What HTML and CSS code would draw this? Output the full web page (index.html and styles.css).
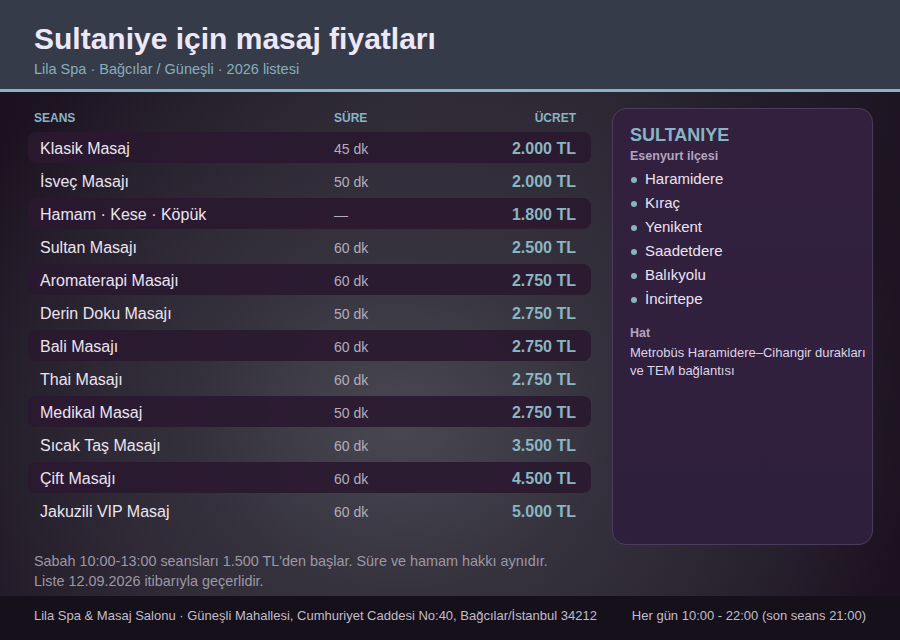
FILE: index.html
```html
<!DOCTYPE html>
<html lang="tr">
<head>
<meta charset="utf-8">
<title>Sultaniye için masaj fiyatları</title>
<link rel="stylesheet" href="styles.css">
</head>
<body>
<div class="page">
  <header class="top">
    <h1 class="title">Sultaniye için masaj fiyatları</h1>
    <div class="subtitle">Lila Spa · Bağcılar / Güneşli · 2026 listesi</div>
  </header>
  <main class="main">
    <div class="content">
      <section class="table">
        <div class="thead">
          <span>SEANS</span><span>SÜRE</span><span class="r">ÜCRET</span>
        </div>
        <div class="rows">
          <div class="row alt"><span class="name">Klasik Masaj</span><span class="dur">45 dk</span><span class="price">2.000 TL</span></div>
          <div class="row"><span class="name">İsveç Masajı</span><span class="dur">50 dk</span><span class="price">2.000 TL</span></div>
          <div class="row alt"><span class="name">Hamam · Kese · Köpük</span><span class="dur">—</span><span class="price">1.800 TL</span></div>
          <div class="row"><span class="name">Sultan Masajı</span><span class="dur">60 dk</span><span class="price">2.500 TL</span></div>
          <div class="row alt"><span class="name">Aromaterapi Masajı</span><span class="dur">60 dk</span><span class="price">2.750 TL</span></div>
          <div class="row"><span class="name">Derin Doku Masajı</span><span class="dur">50 dk</span><span class="price">2.750 TL</span></div>
          <div class="row alt"><span class="name">Bali Masajı</span><span class="dur">60 dk</span><span class="price">2.750 TL</span></div>
          <div class="row"><span class="name">Thai Masajı</span><span class="dur">60 dk</span><span class="price">2.750 TL</span></div>
          <div class="row alt"><span class="name">Medikal Masaj</span><span class="dur">50 dk</span><span class="price">2.750 TL</span></div>
          <div class="row"><span class="name">Sıcak Taş Masajı</span><span class="dur">60 dk</span><span class="price">3.500 TL</span></div>
          <div class="row alt"><span class="name">Çift Masajı</span><span class="dur">60 dk</span><span class="price">4.500 TL</span></div>
          <div class="row"><span class="name">Jakuzili VIP Masaj</span><span class="dur">60 dk</span><span class="price">5.000 TL</span></div>
        </div>
      </section>
      <aside class="side">
        <div class="side-title">SULTANIYE</div>
        <div class="side-label">Esenyurt ilçesi</div>
        <ul class="places">
          <li>Haramidere</li>
          <li>Kıraç</li>
          <li>Yenikent</li>
          <li>Saadetdere</li>
          <li>Balıkyolu</li>
          <li>İncirtepe</li>
        </ul>
        <div class="side-label hat">Hat</div>
        <p class="side-text">Metrobüs Haramidere–Cihangir durakları ve TEM bağlantısı</p>
      </aside>
    </div>
    <div class="notes">
      <p>Sabah 10:00-13:00 seansları 1.500 TL'den başlar. Süre ve hamam hakkı aynıdır.</p>
      <p>Liste 12.09.2026 itibarıyla geçerlidir.</p>
    </div>
  </main>
  <footer class="foot">
    <span>Lila Spa &amp; Masaj Salonu · Güneşli Mahallesi, Cumhuriyet Caddesi No:40, Bağcılar/İstanbul 34212</span>
    <span>Her gün 10:00 - 22:00 (son seans 21:00)</span>
  </footer>
</div>
</body>
</html>
```
FILE: styles.css
```css
* { box-sizing: border-box; }
html, body { margin: 0; padding: 0; }
body {
  font-family: "Liberation Sans", Arial, sans-serif;
  background: #1b1120;
  color: #ece4f0;
}
.page {
  width: 900px;
  height: 640px;
  display: flex;
  flex-direction: column;
  overflow: hidden;
}
.top {
  height: 92px;
  flex-shrink: 0;
  background: #363b4a;
  border-bottom: 3px solid #86b4c6;
  padding: 21px 34px 0;
}
.title {
  margin: 0;
  font-size: 30px;
  line-height: 36px;
  font-weight: 700;
  color: #eee8f6;
}
.subtitle {
  margin-top: 3px;
  font-size: 14.5px;
  line-height: 18px;
  color: #86afbb;
}
.main {
  flex: 1;
  min-height: 0;
  padding: 16px 27px 0 28px;
  background:
    radial-gradient(ellipse 520px 430px at 400px 330px, rgba(74,74,84,0.95) 0%, rgba(58,56,66,0.7) 40%, rgba(28,18,32,0) 100%),
    linear-gradient(100deg, #1b1120 0%, #2a2532 40%, #2a2431 60%, #1b1120 100%);
}
.content {
  display: grid;
  grid-template-columns: 563px 261px;
  column-gap: 21px;
  align-items: start;
}
.thead {
  display: grid;
  grid-template-columns: 300px 1fr auto;
  padding: 0 15px 0 6px;
  height: 20px;
  line-height: 20px;
  font-size: 12px;
  font-weight: 700;
  color: #8ab4c2;
}
.r { text-align: right; }
.rows {
  margin-top: 4px;
  display: flex;
  flex-direction: column;
  gap: 2px;
}
.row {
  display: grid;
  grid-template-columns: 294px 1fr auto;
  align-items: center;
  height: 31px;
  padding: 3px 15px 0 12px;
  border-radius: 8px;
}
.row.alt { background: rgba(42, 24, 48, 0.9); }
.name { font-size: 16px; color: #ece4f0; }
.dur { font-size: 14px; color: #b4adbb; }
.price { font-size: 16px; font-weight: 700; color: #8ab6c2; text-align: right; }
.side {
  min-height: 437px;
  border: 1px solid #4c3c5c;
  border-radius: 14px;
  background: linear-gradient(180deg, #33203f 0%, #2e1f3c 100%);
  padding: 15px 6px 16px 17px;
}
.side-title {
  font-size: 18px;
  line-height: 22px;
  font-weight: 700;
  color: #88b4c4;
}
.side-label {
  margin-top: 2px;
  font-size: 12.5px;
  line-height: 16px;
  font-weight: 700;
  color: #b3a4bf;
}
.places {
  list-style: none;
  margin: 2px 0 0;
  padding: 0;
}
.places li {
  display: flex;
  align-items: center;
  gap: 8px;
  height: 24px;
  padding-top: 1px;
  font-size: 15px;
  color: #ebe3f0;
}
.places li::before {
  content: "";
  width: 6px;
  height: 6px;
  margin-left: 1px;
  border-radius: 50%;
  background: #88b4c0;
  margin-top: 2px;
}
.side-label.hat { margin-top: 15px; }
.side-text {
  margin: 3px 0 0;
  font-size: 13px;
  line-height: 18px;
  color: #ddd4e6;
}
.notes {
  margin-top: 6px;
  padding-left: 6px;
  font-size: 14.4px;
  line-height: 20px;
  color: #9c98a6;
}
.notes p { margin: 0; }
.foot {
  height: 44px;
  flex-shrink: 0;
  background: #16101b;
  display: flex;
  justify-content: space-between;
  align-items: center;
  padding: 0 34px 5px;
  font-size: 13px;
  color: #c2bdca;
}
```
